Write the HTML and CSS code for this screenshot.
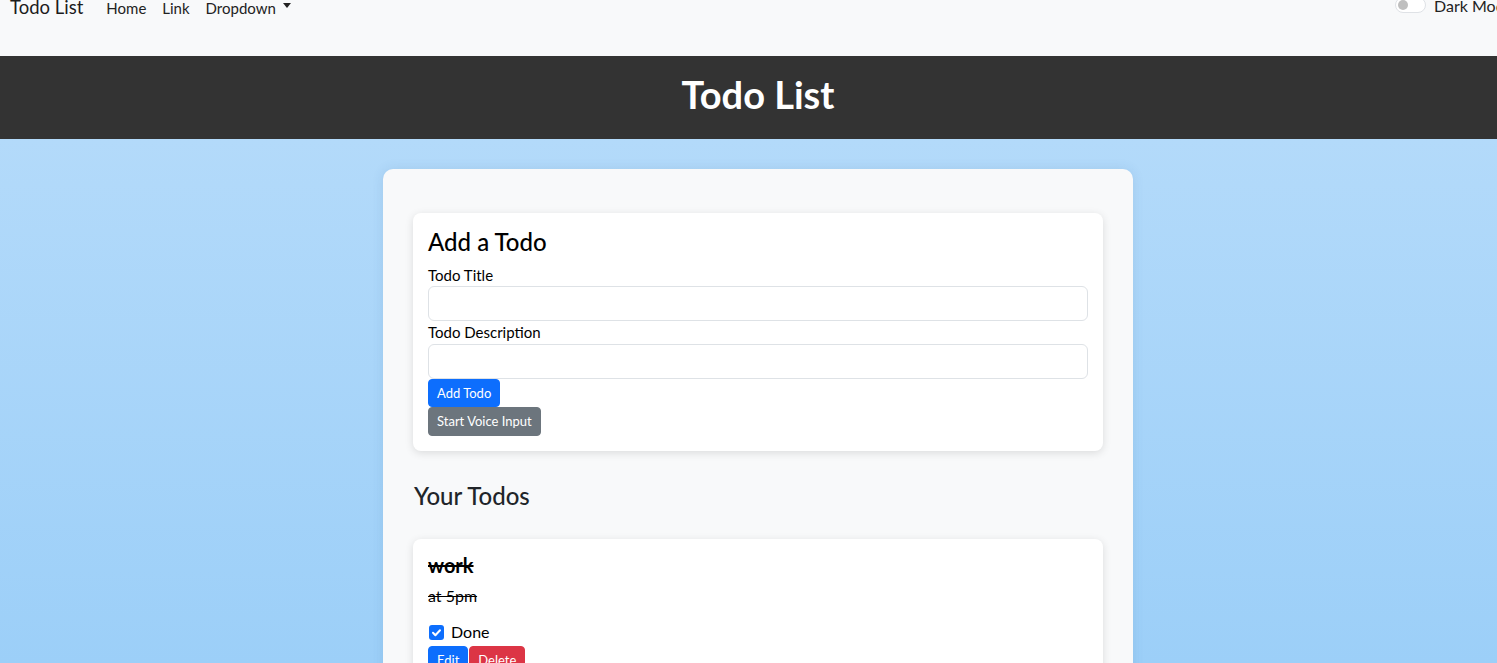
FILE: index.html
```html
<!DOCTYPE html>
<html lang="en">
<head>
<meta charset="utf-8">
<title>Todo List</title>
<link rel="stylesheet" href="styles.css">
</head>
<body>
<nav class="navbar">
  <div class="nav-row">
    <a class="brand" href="#">Todo List</a>
    <ul class="nav-links">
      <li><a href="#">Home</a></li>
      <li><a href="#">Link</a></li>
      <li><a href="#">Dropdown<span class="caret"></span></a></li>
    </ul>
    <label class="mode-toggle">
      <span class="switch"><span class="knob"></span></span>
      <span class="mode-text">Dark Mode</span>
    </label>
  </div>
</nav>

<header class="page-header">
  <h1>Todo List</h1>
</header>

<main class="main">
  <div class="container">
    <section class="card add-card">
      <h3 class="card-title">Add a Todo</h3>
      <label class="field-label">Todo Title</label>
      <input class="field-input" type="text">
      <label class="field-label">Todo Description</label>
      <input class="field-input" type="text">
      <div class="stack-buttons">
        <button class="btn btn-primary">Add Todo</button>
        <button class="btn btn-secondary btn-tall">Start Voice Input</button>
      </div>
    </section>

    <h2 class="section-title">Your Todos</h2>

    <div class="card todo-card">
      <h5 class="todo-title done">work</h5>
      <p class="todo-desc done">at 5pm</p>
      <div class="check-row">
        <span class="checkbox">
          <svg width="15" height="15" viewBox="0 0 15 15"><path d="M4 7.8 L6.4 10.2 L11 5.3" fill="none" stroke="#fff" stroke-width="2" stroke-linecap="round" stroke-linejoin="round"/></svg>
        </span>
        <span class="check-label">Done</span>
      </div>
      <div class="row-buttons">
        <button class="btn btn-primary">Edit</button>
        <button class="btn btn-danger">Delete</button>
      </div>
    </div>
  </div>
</main>
</body>
</html>
```

FILE: styles.css
```css
html {
  overflow: hidden;
}

body {
  margin: 0;
  width: 1516px;
  font-family: "Lato", "Noto Sans", sans-serif;
  color: #212529;
}

a {
  color: inherit;
  text-decoration: none;
}

/* Navbar */
.navbar {
  height: 56px;
  background: #f8f9fa;
  overflow: hidden;
}

.nav-row {
  display: flex;
  align-items: baseline;
  margin-top: -3px;
  padding-left: 10px;
}

.brand {
  font-size: 18.5px;
  line-height: 20px;
  color: #1c1c1c;
  margin-right: 15px;
}

.nav-links {
  display: flex;
  list-style: none;
  margin: 0;
  padding: 0;
}

.nav-links a {
  display: block;
  font-size: 15px;
  line-height: 16px;
  padding: 0 8px;
  color: #222;
}

.caret {
  display: inline-block;
  margin-left: 7px;
  vertical-align: 0.38em;
  border-top: 5px solid #222;
  border-left: 4.5px solid transparent;
  border-right: 4.5px solid transparent;
}

.mode-toggle {
  margin-left: auto;
  width: 121px;
  flex-shrink: 0;
  align-self: flex-start;
  margin-top: 1px;
  display: flex;
  align-items: flex-start;
}

.switch {
  width: 31px;
  height: 16px;
  margin-top: -1px;
  margin-right: 8px;
  box-sizing: border-box;
  border: 1px solid #dfe2e6;
  border-radius: 8px;
  background: #fff;
  display: flex;
  align-items: center;
  padding-left: 2px;
  flex-shrink: 0;
}

.knob {
  width: 10px;
  height: 10px;
  border-radius: 50%;
  background: #bfbfbf;
}

.mode-text {
  font-size: 16px;
  line-height: 16px;
  white-space: nowrap;
  color: #222;
}

/* Header */
.page-header {
  height: 83px;
  box-sizing: border-box;
  padding-top: 14px;
  background: #333333;
  text-align: center;
}

.page-header h1 {
  margin: 0;
  font-size: 38px;
  line-height: 48px;
  font-weight: 700;
  color: #fff;
}

/* Main */
.main {
  min-height: 524px;
  padding-top: 30px;
  background-color: #9ccff8;
  background-image: linear-gradient(180deg, #b3dafa 0%, #9ccff8 100%);
  background-size: 100% 524px;
  background-repeat: no-repeat;
}

.container {
  width: 750px;
  margin: 0 auto;
  box-sizing: border-box;
  padding: 44px 30px 30px;
  background: #f8f9fa;
  border-radius: 10px;
  box-shadow: 0 0 12px rgba(40, 90, 140, 0.12);
}

.card {
  background: #fff;
  border-radius: 8px;
  box-shadow: 0 2px 8px rgba(0, 0, 0, 0.12);
}

.add-card {
  padding: 15px;
}

.card-title {
  margin: 0 0 7px;
  font-size: 24px;
  line-height: 28.8px;
  font-weight: 500;
  color: #000;
}

.field-label {
  display: block;
  font-size: 15px;
  line-height: 22.5px;
  color: #000;
}

.field-input {
  display: block;
  width: 100%;
  height: 35px;
  box-sizing: border-box;
  border: 1px solid #dee2e6;
  border-radius: 6px;
  background: #fff;
  font: inherit;
  margin: 0;
}

.stack-buttons {
  display: flex;
  flex-direction: column;
  align-items: flex-start;
}

.btn {
  height: 28px;
  box-sizing: border-box;
  padding: 0 8px;
  border: 1px solid transparent;
  border-radius: 4px;
  font-family: inherit;
  font-size: 13px;
  line-height: 26px;
  color: #fff;
  cursor: pointer;
}

.btn-tall {
  height: 29px;
}

.btn-primary {
  background: #0d6efd;
  border-color: #0d6efd;
}

.btn-secondary {
  background: #6c757d;
  border-color: #6c757d;
}

.btn-danger {
  background: #dc3545;
  border-color: #dc3545;
}

.section-title {
  margin: 31px 0 28px 1px;
  font-size: 24px;
  line-height: 28.8px;
  font-weight: 500;
  color: #212529;
}

.todo-card {
  padding: 14px 15px 16px;
}

.todo-title {
  margin: 0 0 7px;
  font-size: 20px;
  line-height: 24px;
  font-weight: 700;
  color: #000;
}

.todo-desc {
  margin: 0 0 12px;
  font-size: 16px;
  line-height: 24px;
  color: #000;
}

.done {
  text-decoration: line-through;
}

.check-row {
  display: flex;
  align-items: center;
  height: 24px;
  margin-bottom: 2px;
}

.checkbox {
  width: 15px;
  height: 15px;
  margin-left: 1px;
  margin-right: 7px;
  margin-top: 2px;
  border-radius: 3px;
  background: #0d6efd;
  display: flex;
}

.check-label {
  font-size: 16px;
  line-height: 24px;
  color: #000;
}

.row-buttons {
  display: flex;
  gap: 1px;
}
```
